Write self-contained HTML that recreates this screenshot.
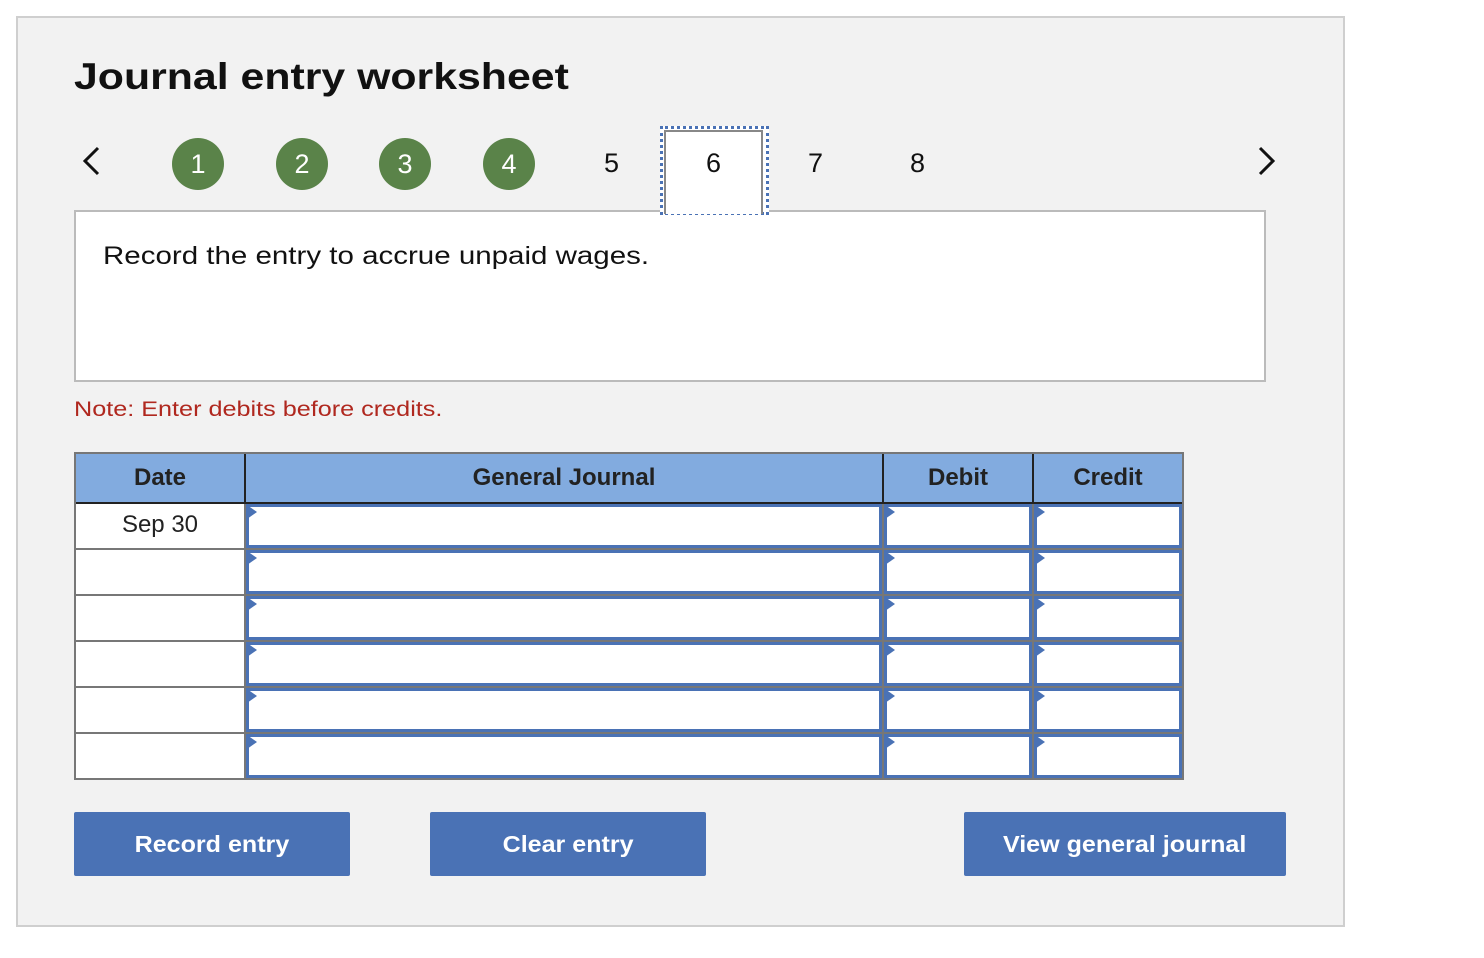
<!DOCTYPE html>
<html><head><meta charset="utf-8"><style>
body{margin:0;background:#fff;font-family:"Liberation Sans",Arial,sans-serif;}
.a{position:absolute}
.panel{left:16px;top:16px;width:1325px;height:907px;background:#f2f2f2;border:2px solid #cfcfcf;}
.c{width:52px;height:52px;border-radius:50%;background:#5a8349;color:#fff;font-size:27px;text-align:center;line-height:52px;top:138px}
.n{font-size:27px;top:148px;color:#111}
.g{background:#777}
.in{background:#fff;border:3px solid #4a72b5;box-sizing:border-box}
.tri{width:0;height:0;border-top:7px solid transparent;border-bottom:7px solid transparent;border-left:10px solid #4a72b5}
.btn{top:812px;height:64px;background:#4a72b5;color:#fff;font-weight:bold;font-size:23px;text-align:center;line-height:64px;border-radius:2px}
.btn span{display:inline-block;transform:scaleX(1.09)}
.h{top:454px;height:48px;line-height:48px;text-align:center;font-weight:bold;font-size:24px;color:#222}
.sx{transform-origin:0 0;white-space:nowrap}
</style></head><body>
<div class="a panel"></div>
<div class="a sx" style="left:74px;top:56px;font-size:37px;font-weight:bold;color:#111;transform:scaleX(1.157)">Journal entry worksheet</div>
<svg class="a" style="left:80px;top:146px" width="22" height="30"><path d="M18 2 L5 15 L18 28" stroke="#111" stroke-width="3" fill="none"/></svg>
<svg class="a" style="left:1256px;top:146px" width="22" height="30"><path d="M4 2 L17 15 L4 28" stroke="#111" stroke-width="3" fill="none"/></svg>
<div class="a c" style="left:172px">1</div>
<div class="a c" style="left:276px">2</div>
<div class="a c" style="left:379px">3</div>
<div class="a c" style="left:483px">4</div>
<div class="a n" style="left:604px">5</div>
<div class="a" style="left:74px;top:210px;width:1188px;height:168px;background:#fff;border:2px solid #bbb"></div>
<div class="a" style="left:660px;top:126px;width:103px;height:83px;border:3px dotted #4a72b5;background:#fff"></div>
<div class="a" style="left:664px;top:130px;width:99px;height:84px;border:2px solid #888;border-bottom:none;box-sizing:border-box;background:#fff"></div>
<div class="a n" style="left:706px">6</div>
<div class="a n" style="left:808px">7</div>
<div class="a n" style="left:910px">8</div>
<div class="a sx" style="left:103px;top:242px;font-size:25px;color:#111;transform:scaleX(1.18)">Record the entry to accrue unpaid wages.</div>
<div class="a sx" style="left:74px;top:398px;font-size:21px;color:#b0281f;transform:scaleX(1.2)">Note: Enter debits before credits.</div>
<div class="a g" style="left:74px;top:452px;width:1110px;height:328px"></div>
<div class="a" style="left:76px;top:454px;width:1106px;height:48px;background:#82abdf"></div>
<div class="a" style="left:244px;top:454px;width:2px;height:48px;background:#222"></div>
<div class="a" style="left:882px;top:454px;width:2px;height:48px;background:#222"></div>
<div class="a" style="left:1032px;top:454px;width:2px;height:48px;background:#222"></div>
<div class="a" style="left:76px;top:502px;width:1106px;height:2px;background:#222"></div>
<div class="a h" style="left:76px;width:168px">Date</div>
<div class="a h" style="left:246px;width:636px">General Journal</div>
<div class="a h" style="left:884px;width:148px">Debit</div>
<div class="a h" style="left:1034px;width:148px">Credit</div>
<div id="rows"></div>
<div class="a" style="left:76px;top:511px;width:168px;text-align:center;font-size:24px;color:#222">Sep 30</div>
<div class="a btn" style="left:74px;width:276px"><span>Record entry</span></div>
<div class="a btn" style="left:430px;width:276px"><span>Clear entry</span></div>
<div class="a btn" style="left:964px;width:322px"><span>View general journal</span></div>
<script>
var h='',tops=[504,550,596,642,688,734];
tops.forEach(function(t){
 h+='<div class="a" style="left:76px;top:'+t+'px;width:168px;height:44px;background:#fff"></div>';
 [[246,636],[884,148],[1034,148]].forEach(function(c){
  h+='<div class="a in" style="left:'+c[0]+'px;top:'+t+'px;width:'+c[1]+'px;height:44px"></div>';
  h+='<div class="a tri" style="left:'+(c[0]+1)+'px;top:'+(t+1)+'px"></div>';
 });
});
document.getElementById('rows').innerHTML=h;
</script>
</body></html>
